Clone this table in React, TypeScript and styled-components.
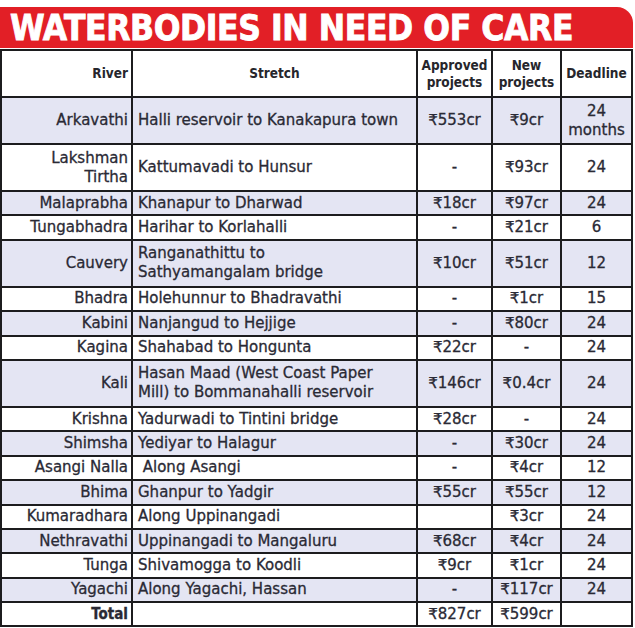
import React from "react";
import styled, { createGlobalStyle } from "styled-components";

const GlobalStyle = createGlobalStyle`
  html, body { margin: 0; padding: 0; background: #ffffff; }
  body { font-family: "DejaVu Sans", sans-serif; }
`;

const Page = styled.div`
  width: 633px;
  padding-top: 7px;
`;

const TitleBar = styled.h1`
  margin: 0 0 1px 0;
  height: 41px;
  background: #e21f26;
  border-top-right-radius: 16px;
  color: #ffffff;
  font-family: "DejaVu Sans Condensed", "DejaVu Sans", sans-serif;
  font-weight: 700;
  font-size: 35px;
  line-height: 42px;
  padding-left: 10px;
  white-space: nowrap;
  letter-spacing: -0.4px;
  -webkit-text-stroke: 0.8px #ffffff;
  overflow: hidden;
`;

const Table = styled.table`
  width: 633px;
  border-collapse: collapse;
  table-layout: fixed;
  color: #2a2a35;
`;

const Row = styled.tr<{ $tall?: boolean; $shade?: boolean }>`
  height: ${(p) => (p.$tall ? 47 : 24.4)}px;
  background: ${(p) => (p.$shade ? "#e4e5f3" : "#ffffff")};
`;

const HeadRow = styled.tr`
  height: 47px;
  background: #ffffff;
`;

type Align = "left" | "right" | "center";

const HeadCell = styled.th<{ $align: Align }>`
  border: 2px solid #1c1c1e;
  padding: 0 3px;
  text-align: ${(p) => p.$align};
  font-family: "DejaVu Sans Condensed", "DejaVu Sans", sans-serif;
  font-weight: 700;
  font-size: 13.5px;
  line-height: 17px;
  color: #26262c;
  vertical-align: middle;
`;

const Cell = styled.td<{ $align: Align }>`
  border: 2px solid #1c1c1e;
  padding: 0 ${(p) => (p.$align === "left" ? "4px 0 5px" : p.$align === "right" ? "3px 0 2px" : "2px")};
  text-align: ${(p) => p.$align};
  font-family: "DejaVu Sans", sans-serif;
  font-size: 15px;
  line-height: 19px;
  vertical-align: middle;
  white-space: nowrap;
  -webkit-text-stroke: 0.3px #2a2a35;
`;

type Entry = {
  river: string[];
  stretch: string[];
  approved: string;
  fresh: string;
  deadline: string[];
  tall?: boolean;
};

const data: Entry[] = [
  { river: ["Arkavathi"], stretch: ["Halli reservoir to Kanakapura town"], approved: "₹553cr", fresh: "₹9cr", deadline: ["24", "months"], tall: true },
  { river: ["Lakshman", "Tirtha"], stretch: ["Kattumavadi to Hunsur"], approved: "-", fresh: "₹93cr", deadline: ["24"], tall: true },
  { river: ["Malaprabha"], stretch: ["Khanapur to Dharwad"], approved: "₹18cr", fresh: "₹97cr", deadline: ["24"] },
  { river: ["Tungabhadra"], stretch: ["Harihar to Korlahalli"], approved: "-", fresh: "₹21cr", deadline: ["6"] },
  { river: ["Cauvery"], stretch: ["Ranganathittu to", "Sathyamangalam bridge"], approved: "₹10cr", fresh: "₹51cr", deadline: ["12"], tall: true },
  { river: ["Bhadra"], stretch: ["Holehunnur to Bhadravathi"], approved: "-", fresh: "₹1cr", deadline: ["15"] },
  { river: ["Kabini"], stretch: ["Nanjangud to Hejjige"], approved: "-", fresh: "₹80cr", deadline: ["24"] },
  { river: ["Kagina"], stretch: ["Shahabad to Hongunta"], approved: "₹22cr", fresh: "-", deadline: ["24"] },
  { river: ["Kali"], stretch: ["Hasan Maad (West Coast Paper", "Mill) to Bommanahalli reservoir"], approved: "₹146cr", fresh: "₹0.4cr", deadline: ["24"], tall: true },
  { river: ["Krishna"], stretch: ["Yadurwadi to Tintini bridge"], approved: "₹28cr", fresh: "-", deadline: ["24"] },
  { river: ["Shimsha"], stretch: ["Yediyar to Halagur"], approved: "-", fresh: "₹30cr", deadline: ["24"] },
  { river: ["Asangi Nalla"], stretch: ["\u00a0Along Asangi"], approved: "-", fresh: "₹4cr", deadline: ["12"] },
  { river: ["Bhima"], stretch: ["Ghanpur to Yadgir"], approved: "₹55cr", fresh: "₹55cr", deadline: ["12"] },
  { river: ["Kumaradhara"], stretch: ["Along Uppinangadi"], approved: "", fresh: "₹3cr", deadline: ["24"] },
  { river: ["Nethravathi"], stretch: ["Uppinangadi to Mangaluru"], approved: "₹68cr", fresh: "₹4cr", deadline: ["24"] },
  { river: ["Tunga"], stretch: ["Shivamogga to Koodli"], approved: "₹9cr", fresh: "₹1cr", deadline: ["24"] },
  { river: ["Yagachi"], stretch: ["Along Yagachi, Hassan"], approved: "-", fresh: "₹117cr", deadline: ["24"] },
];

const Lines = ({ items }: { items: string[] }) => (
  <>
    {items.map((t, i) => (
      <React.Fragment key={i}>
        {i > 0 && <br />}
        {t}
      </React.Fragment>
    ))}
  </>
);

const TotalLabel = styled.span`
  font-weight: 700;
  font-family: "DejaVu Sans Condensed", "DejaVu Sans", sans-serif;
`;

export default function App() {
  return (
    <Page>
      <GlobalStyle />
      <TitleBar>WATERBODIES IN NEED OF CARE</TitleBar>
      <Table>
        <colgroup>
          <col style={{ width: 131 }} />
          <col style={{ width: 285 }} />
          <col style={{ width: 75 }} />
          <col style={{ width: 69 }} />
          <col style={{ width: 71 }} />
        </colgroup>
        <thead>
          <HeadRow>
            <HeadCell $align="right">River</HeadCell>
            <HeadCell $align="center">Stretch</HeadCell>
            <HeadCell $align="center">Approved<br />projects</HeadCell>
            <HeadCell $align="center">New<br />projects</HeadCell>
            <HeadCell $align="center">Deadline</HeadCell>
          </HeadRow>
        </thead>
        <tbody>
          {data.map((r, i) => (
            <Row key={i} $tall={r.tall} $shade={i % 2 === 0}>
              <Cell $align="right"><Lines items={r.river} /></Cell>
              <Cell $align="left"><Lines items={r.stretch} /></Cell>
              <Cell $align="center">{r.approved}</Cell>
              <Cell $align="center">{r.fresh}</Cell>
              <Cell $align="center"><Lines items={r.deadline} /></Cell>
            </Row>
          ))}
          <Row>
            <Cell $align="right"><TotalLabel>Total</TotalLabel></Cell>
            <Cell $align="left" />
            <Cell $align="center">₹827cr</Cell>
            <Cell $align="center">₹599cr</Cell>
            <Cell $align="center" />
          </Row>
        </tbody>
      </Table>
    </Page>
  );
}
